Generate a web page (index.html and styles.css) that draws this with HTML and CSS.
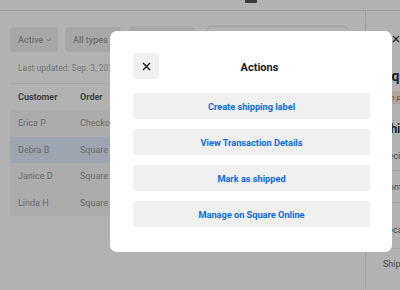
FILE: index.html
```html
<!DOCTYPE html>
<html>
<head>
<meta charset="utf-8">
<link rel="stylesheet" href="styles.css">
</head>
<body>
<div class="page">
  <div class="topbar"><div class="topicon"></div></div>
  <div class="content">
    <div class="main">
      <div class="filters">
        <div class="filter f-active">Active <svg class="chev" width="5" height="4" viewBox="0 0 5 4"><path d="M0.5 1L2.5 3L4.5 1" stroke="#a0a0a0" stroke-width="0.9" fill="none"/></svg></div>
        <div class="filter f-types">All types <svg class="chev" width="5" height="4" viewBox="0 0 5 4"><path d="M0.5 1L2.5 3L4.5 1" stroke="#a0a0a0" stroke-width="0.9" fill="none"/></svg></div>
        <div class="filter f-third"></div>
        <div class="search"></div>
      </div>
      <div class="updated">Last updated: Sep. 3, 2021</div>
      <div class="table">
        <div class="row head"><span class="c1">Customer</span><span class="c2">Order</span></div>
        <div class="row body"><span class="c1">Erica P</span><span class="c2">Checkout</span></div>
        <div class="row body selected"><span class="c1">Debra B</span><span class="c2">Square Online</span></div>
        <div class="row body"><span class="c1">Janice D</span><span class="c2">Square Online</span></div>
        <div class="row body last"><span class="c1">Linda H</span><span class="c2">Square Online</span></div>
      </div>
    </div>
    <div class="panel">
      <div class="panel-head">
        <svg class="panel-x" width="8" height="8" viewBox="0 0 8 8"><path d="M1 1L7 7M7 1L1 7" stroke="#3a3a3a" stroke-width="1.3" fill="none"/></svg>
      </div>
      <div class="panel-title">Square Online</div>
      <div class="banner">In progress</div>
      <div class="panel-sub">Shipping</div>
      <div class="prow p1">Recipient</div>
      <div class="prow p2">Contact</div>
      <div class="prow p3">Location</div>
      <div class="prow p4">Ship by</div>
    </div>
  </div>
  <div class="overlay"></div>
  <div class="modal">
    <div class="modal-head">
      <button class="close"><svg width="9" height="9" viewBox="0 0 9 9"><path d="M1 1L8 8M8 1L1 8" stroke="#1a1a1a" stroke-width="1.4" fill="none"/></svg></button>
      <div class="modal-title">Actions</div>
      <div class="spacer"></div>
    </div>
    <div class="actions">
      <button class="action">Create shipping label</button>
      <button class="action">View Transaction Details</button>
      <button class="action">Mark as shipped</button>
      <button class="action">Manage on Square Online</button>
    </div>
  </div>
</div>
</body>
</html>
```
FILE: styles.css
```css
* { box-sizing: border-box; }
html, body { margin: 0; padding: 0; }
body {
  width: 400px;
  height: 290px;
  overflow: hidden;
  font-family: Roboto, "Liberation Sans", sans-serif;
  background: #fff;
}
.page {
  position: relative;
  width: 400px;
  height: 290px;
  overflow: hidden;
}
.topbar {
  height: 11px;
  border-bottom: 1px solid #e2e2e2;
  display: flex;
  padding-left: 245px;
}
.topicon {
  width: 12px;
  height: 3px;
  background: #555;
  border-radius: 0 0 1px 1px;
}
.content {
  display: flex;
  height: 279px;
}
.main {
  width: 365px;
  padding: 16px 0 0 10px;
}
.filters {
  display: flex;
  height: 25px;
}
.filter {
  height: 25px;
  background: #f0f0f0;
  border-radius: 4px;
  font-size: 9px;
  font-weight: 500;
  color: #a0a0a0;
  display: flex;
  align-items: center;
  padding-left: 8px;
  gap: 3px;
}
.chev { margin-top: 1px; }
.f-active { width: 48px; }
.f-types { width: 56px; margin-left: 7px; }
.f-third { width: 67px; margin-left: 7px; }
.search {
  width: 141px;
  margin-left: 12px;
  height: 26px;
  margin-top: -1px;
  border: 1px solid #e0e0e0;
  border-radius: 4px;
}
.updated {
  font-size: 8.5px;
  color: #aaaaaa;
  padding-left: 8px;
  height: 32px;
  display: flex;
  align-items: center;
  border-bottom: 1px solid #ececec;
}
.table { width: 345px; }
.row {
  display: flex;
  align-items: center;
  font-size: 9px;
  padding-left: 8px;
}
.row .c1 { width: 62px; }
.head { height: 26px; font-weight: 700; color: #5e5e5e; }
.body { height: 26.5px; background: #f6f6f6; color: #9a9a9a; }
.body.selected { background: #e1edfc; }
.panel {
  width: 35px;
  border-left: 1px solid #e4e4e4;
  padding-left: 17px;
  white-space: nowrap;
  font-size: 9px;
}
.panel-head {
  height: 32px;
  display: flex;
  align-items: flex-end;
  padding-left: 9px;
}
.panel-title {
  margin-top: 25px;
  font-size: 14px;
  font-weight: 700;
  color: #333;
}
.banner {
  margin-top: 7px;
  margin-left: -6px;
  padding-left: 11px;
  width: 60px;
  height: 13px;
  background: #fdeede;
  color: #b06a2a;
  font-size: 8px;
  line-height: 13px;
}
.panel-sub {
  margin-top: 18px;
  font-size: 12px;
  font-weight: 700;
  color: #333;
}
.prow {
  color: #6a6a6a;
  border-bottom: 1px solid #ececec;
  display: flex;
  align-items: center;
}
.p1 { height: 35px; padding-top: 5px; }
.p2 { height: 32px; }
.p3 { height: 46px; padding-top: 8px; }
.p4 { height: 30px; border-bottom: none; }
.overlay {
  position: absolute;
  inset: 0;
  background: rgba(0, 0, 0, 0.3);
}
.modal {
  position: absolute;
  left: 110px;
  top: 31px;
  width: 282px;
  height: 221px;
  background: #fff;
  border-radius: 7px;
  padding: 22px 22px 0 23px;
}
.modal-head {
  display: grid;
  grid-template-columns: 26px 1fr 10px;
  align-items: center;
  height: 26px;
}
.close {
  width: 26px;
  height: 26px;
  border: none;
  background: #f0f0f0;
  border-radius: 3px;
  padding: 0;
  display: flex;
  align-items: center;
  justify-content: center;
}
.modal-title {
  text-align: center;
  font-size: 11px;
  font-weight: 700;
  color: #1a1a1a;
  padding-top: 2px;
}
.actions {
  display: flex;
  flex-direction: column;
  gap: 10px;
  margin-top: 14px;
}
.action {
  height: 26px;
  border: none;
  border-radius: 4px;
  background: #f0f0f0;
  color: #0a6ae6;
  font-family: Roboto, "Liberation Sans", sans-serif;
  font-size: 9.2px;
  font-weight: 700;
  padding: 0;
}
```
